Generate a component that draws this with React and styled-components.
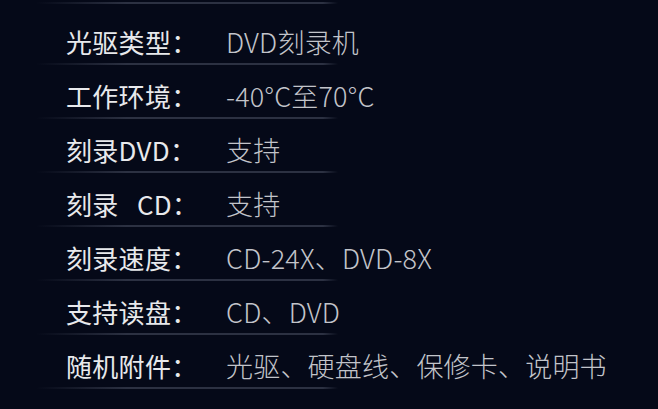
import React from "react";
import styled, { createGlobalStyle } from "styled-components";

const GlobalStyle = createGlobalStyle`
  html, body {
    margin: 0;
    padding: 0;
    background: #050918;
  }
  body {
    font-family: "Noto Sans CJK SC", "Noto Sans", sans-serif;
  }
`;

const specs = [
  { label: "光驱类型：", value: "DVD刻录机" },
  { label: "工作环境：", value: "-40°C至70°C" },
  { label: "刻录DVD：", value: "支持" },
  { label: "刻录   CD：", value: "支持" },
  { label: "刻录速度：", value: "CD-24X、DVD-8X" },
  { label: "支持读盘：", value: "CD、DVD" },
  { label: "随机附件：", value: "光驱、硬盘线、保修卡、说明书" },
];

export default function App() {
  return (
    <>
      <GlobalStyle />
      <Wrapper>
        <SpecList>
          {specs.map((s) => (
            <Row key={s.label}>
              <Label>{s.label}</Label>
              <Value>{s.value}</Value>
            </Row>
          ))}
        </SpecList>
      </Wrapper>
    </>
  );
}

//Styled Components
const Wrapper = styled.div`
  width: 658px;
  height: 409px;
  overflow: hidden;
  padding-top: 1px;
  box-sizing: border-box;
`;

const rule = `
  content: "";
  position: absolute;
  width: 302px;
  height: 2px;
  background: linear-gradient(
    to right,
    rgba(44, 49, 66, 0) 0%,
    rgba(44, 49, 66, 1) 30%,
    rgba(44, 49, 66, 1) 95%,
    rgba(44, 49, 66, 0) 100%
  );
`;

const SpecList = styled.ul`
  list-style: none;
  margin: 0;
  padding: 10px 0 0 66px;
  position: relative;
  &::before {
    ${rule}
    left: 36px;
    top: 1px;
  }
`;

const Row = styled.li`
  position: relative;
  display: flex;
  align-items: center;
  height: 54px;
  padding-top: 6px;
  box-sizing: border-box;
  &::after {
    ${rule}
    left: -30px;
    bottom: 0;
  }
`;

const Label = styled.span`
  width: 160px;
  flex-shrink: 0;
  font-size: 26px;
  font-weight: 400;
  letter-spacing: 0.3px;
  color: #e8e9ec;
  white-space: pre;
`;

const Value = styled.span`
  font-size: 27px;
  font-weight: 300;
  letter-spacing: 0.2px;
  color: #c2c4ca;
  white-space: nowrap;
`;
